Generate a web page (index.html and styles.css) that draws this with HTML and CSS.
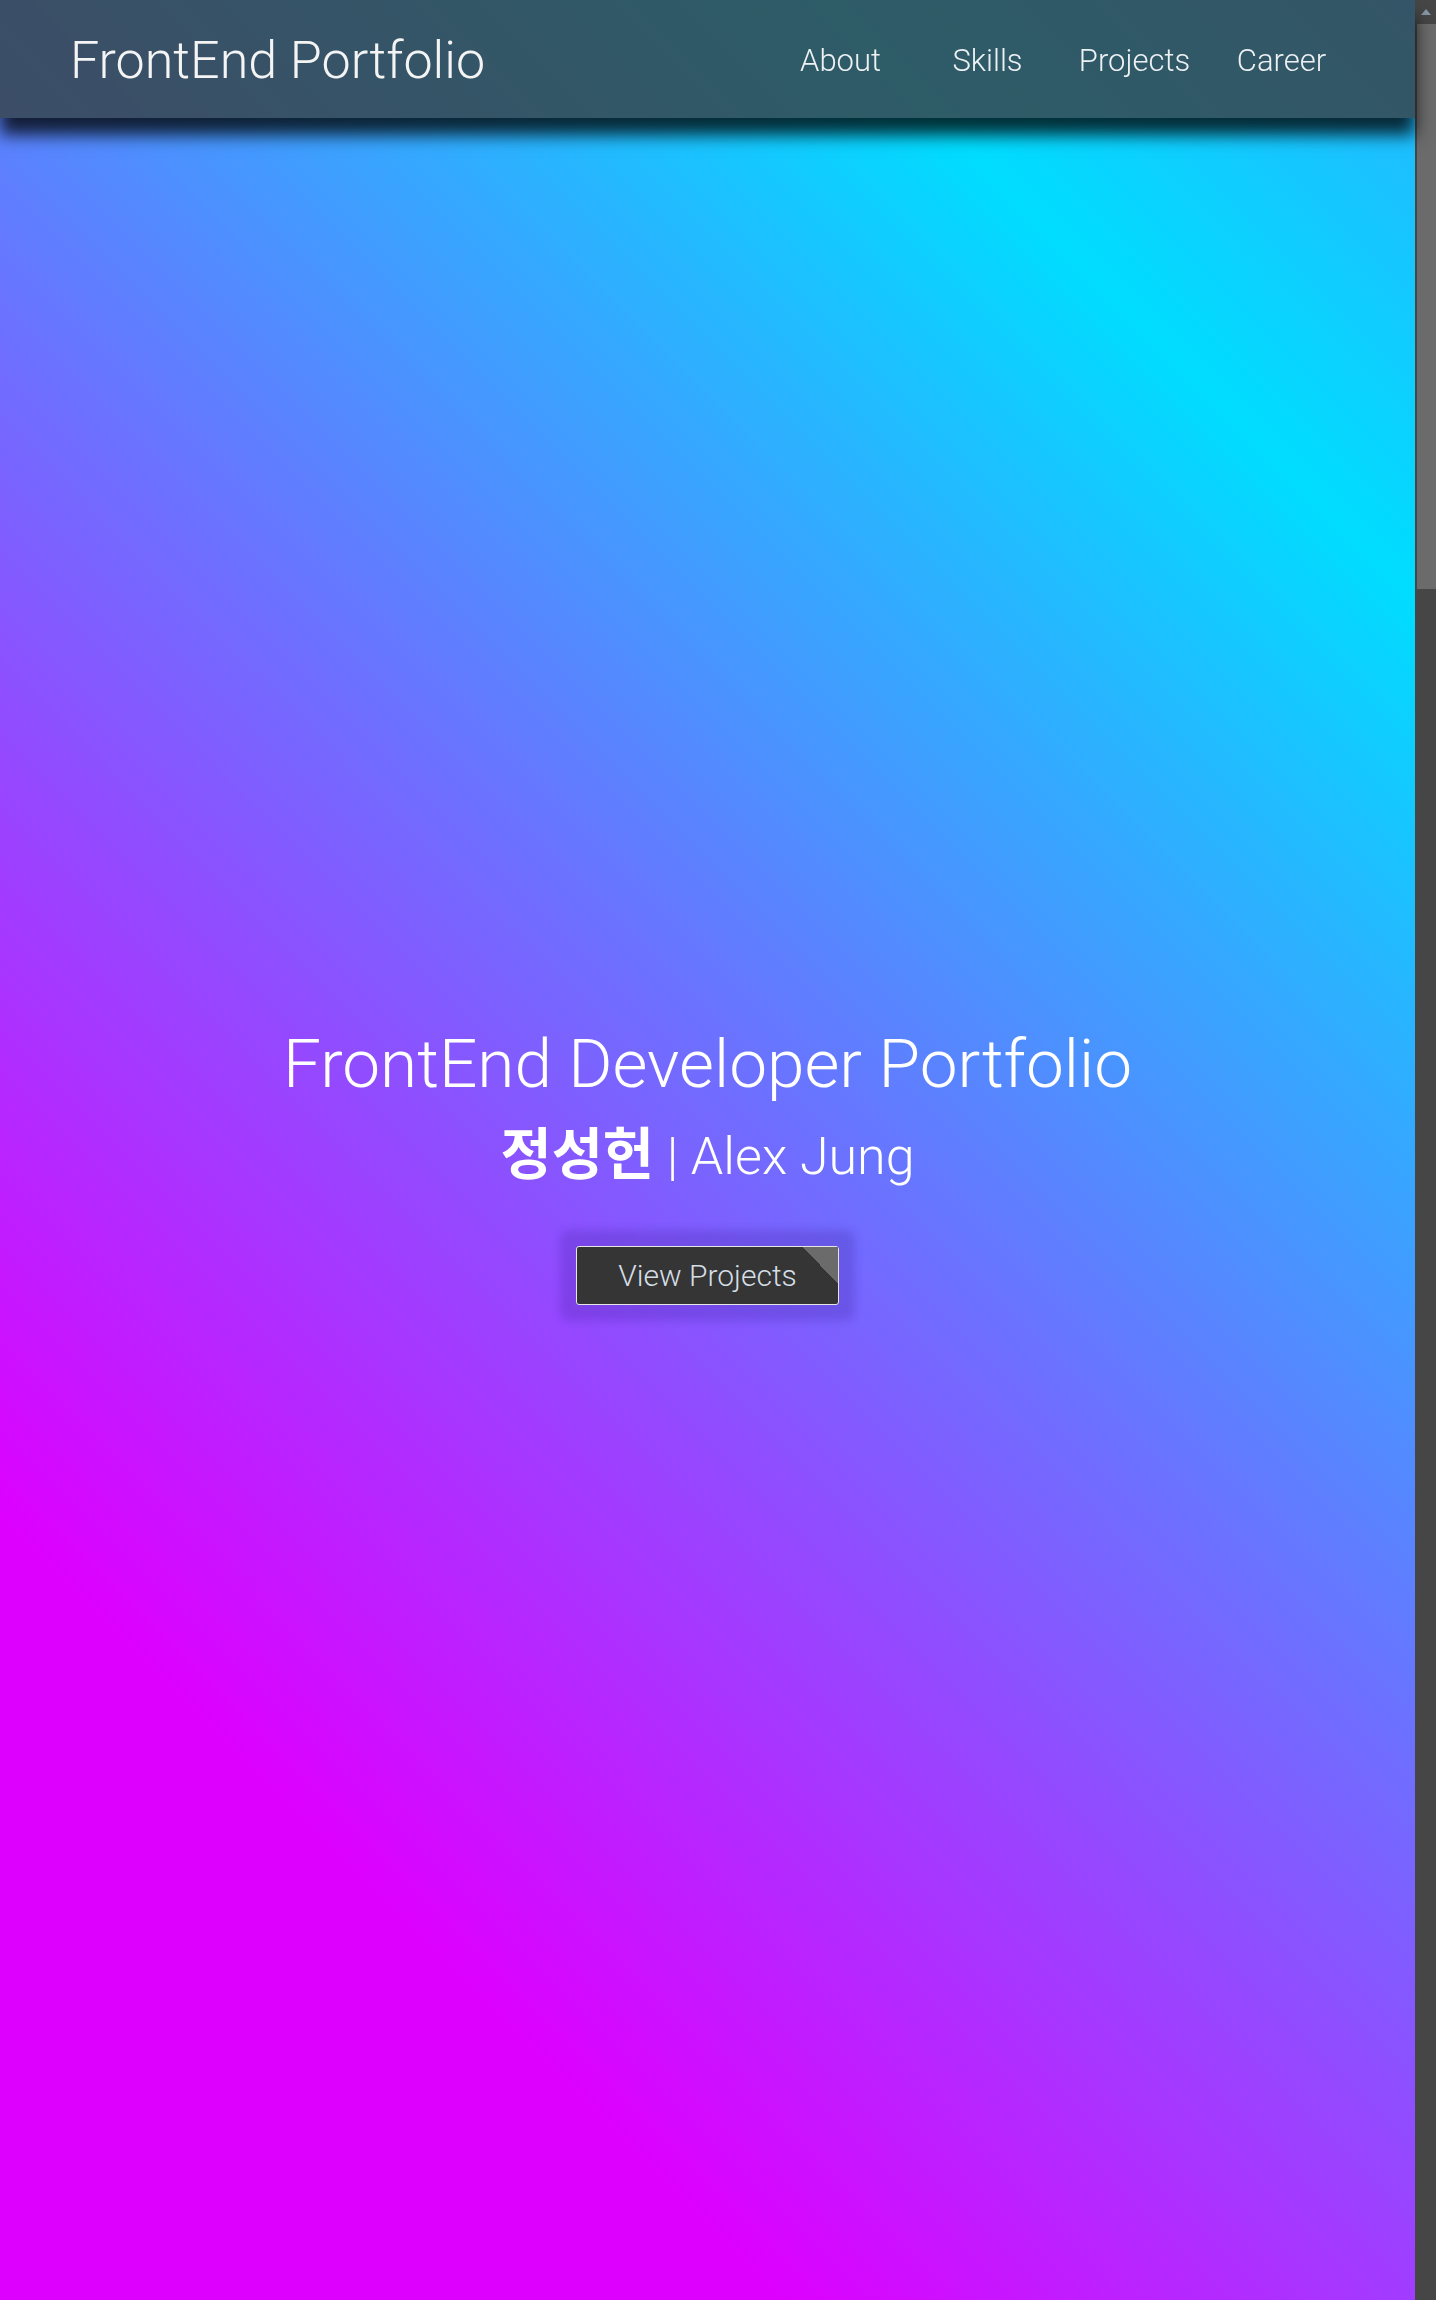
FILE: index.html
```html
<!DOCTYPE html>
<html lang="ko">
<head>
<meta charset="utf-8">
<title>FrontEnd Portfolio</title>
<link rel="stylesheet" href="styles.css">
</head>
<body>
<div class="page">
  <header class="site-header">
    <a class="logo" href="#home">FrontEnd Portfolio</a>
    <nav class="nav">
      <ul class="nav-list">
        <li class="nav-item"><a class="nav-link" href="#about">About</a></li>
        <li class="nav-item"><a class="nav-link" href="#skills">Skills</a></li>
        <li class="nav-item"><a class="nav-link" href="#projects">Projects</a></li>
        <li class="nav-item"><a class="nav-link" href="#career">Career</a></li>
      </ul>
    </nav>
  </header>
  <main>
    <section class="hero" id="home">
      <div class="hero-content">
        <h1 class="hero-title">FrontEnd Developer Portfolio</h1>
        <p class="hero-subtitle"><strong class="name-ko">정성헌</strong> | Alex Jung</p>
        <a class="btn-view" href="#projects">View Projects</a>
      </div>
    </section>
  </main>
</div>
<div class="scroll-rail" aria-hidden="true">
  <div class="rail-button"><span class="rail-arrow"></span></div>
  <div class="rail-thumb"></div>
</div>
</body>
</html>
```

FILE: styles.css
```css
* { box-sizing: border-box; }

html, body {
  margin: 0;
  padding: 0;
  height: 100%;
  overflow: hidden;
}

body {
  display: flex;
  font-family: Roboto, "Noto Sans CJK KR", sans-serif;
  font-weight: 300;
  color: #ffffff;
  background: #464646;
}

.page {
  flex: 1 1 auto;
  min-width: 0;
  position: relative;
}

/* scrollbar rail (dark theme) */
.scroll-rail {
  flex: 0 0 21px;
  height: 100vh;
  display: flex;
  flex-direction: column;
  background: #464646;
}

.rail-button {
  height: 21px;
  display: flex;
  justify-content: center;
  align-items: center;
  padding-top: 3px;
  padding-left: 1px;
}

.rail-arrow {
  width: 0;
  height: 0;
  border-style: solid;
  border-width: 0 5.5px 6px 5.5px;
  border-color: transparent transparent #8796a3 transparent;
}

.rail-thumb {
  margin: 3px 0 0 2px;
  height: 565px;
  background: #6b6b6b;
}

/* header */
.site-header {
  position: fixed;
  top: 0;
  left: 0;
  right: 21px;
  z-index: 10;
  height: 118px;
  display: flex;
  align-items: center;
  justify-content: space-between;
  padding: 3px 60px 0 70px;
  background: rgba(55, 67, 74, 0.84);
  box-shadow: 0 17px 16px rgba(0, 0, 0, 0.78);
}

.logo {
  font-size: 52px;
  font-weight: 300;
  color: #f4f4f4;
  text-decoration: none;
  line-height: 1;
}

.nav-list {
  display: flex;
  list-style: none;
  margin: 0;
  padding: 0;
}

.nav-item {
  width: 147px;
  text-align: center;
}

.nav-link {
  font-size: 31px;
  font-weight: 300;
  color: #eef1f4;
  text-decoration: none;
}

/* hero */
.hero {
  height: 100vh;
  display: flex;
  align-items: center;
  justify-content: center;
  padding-top: 28px;
  background: linear-gradient(45deg, #dd00ff 21%, #00ddff 84%, #28b4ff 100%);
}

.hero-content {
  display: flex;
  flex-direction: column;
  align-items: center;
  text-align: center;
}

.hero-title {
  margin: 0;
  font-size: 67.5px;
  font-weight: 300;
  line-height: 1.2;
  color: #ffffff;
}

.hero-subtitle {
  margin: 13px 0 0;
  font-size: 52px;
  font-weight: 300;
  line-height: 1.2;
  color: #ffffff;
}

.name-ko {
  font-family: "Noto Sans CJK KR", sans-serif;
  font-weight: 700;
  font-size: 1.07em;
}

.btn-view {
  position: relative;
  margin-top: 58px;
  display: inline-block;
  padding: 10px 41px;
  font-size: 30px;
  font-weight: 300;
  line-height: 37px;
  color: #d6dee6;
  text-decoration: none;
  background: #353535;
  border: 1px solid #e6e6e6;
  border-radius: 3px;
  box-shadow: 0 0 8px 16px rgba(50, 25, 140, 0.2);
}

.btn-view::after {
  content: "";
  position: absolute;
  top: 0;
  right: 0;
  width: 35px;
  height: 37px;
  background: linear-gradient(to bottom left, #6b6b6b 50%, transparent 50%);
}
```
